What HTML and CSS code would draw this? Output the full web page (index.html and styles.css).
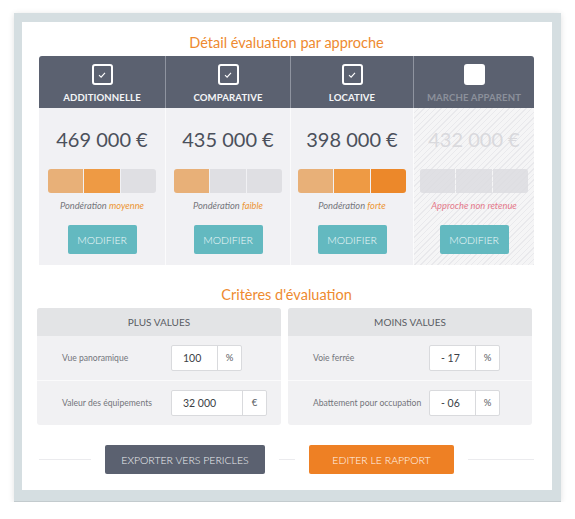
FILE: index.html
```html
<!DOCTYPE html>
<html lang="fr">
<head>
<meta charset="utf-8">
<title>Détail évaluation</title>
<link rel="stylesheet" href="styles.css">
</head>
<body>
<div class="frame">
  <div class="sheet">
    <h2 class="section-title">Détail évaluation par approche</h2>
    <div class="approaches">
      <div class="approach">
        <div class="approach-head">
          <span class="check"><svg viewBox="0 0 10 10" width="10" height="10"><path d="M2 5.2 L4.1 7.2 L8 2.8" fill="none" stroke="#fff" stroke-width="1.1"/></svg></span>
          <span class="approach-name">ADDITIONNELLE</span>
        </div>
        <div class="approach-body">
          <div class="price">469 000 €</div>
          <div class="bar"><span class="seg s1"></span><span class="seg s2"></span><span class="seg"></span></div>
          <div class="weight">Pondération <em>moyenne</em></div>
          <button class="btn-modify">MODIFIER</button>
        </div>
      </div>
      <div class="approach">
        <div class="approach-head">
          <span class="check"><svg viewBox="0 0 10 10" width="10" height="10"><path d="M2 5.2 L4.1 7.2 L8 2.8" fill="none" stroke="#fff" stroke-width="1.1"/></svg></span>
          <span class="approach-name">COMPARATIVE</span>
        </div>
        <div class="approach-body">
          <div class="price">435 000 €</div>
          <div class="bar"><span class="seg s1"></span><span class="seg"></span><span class="seg"></span></div>
          <div class="weight">Pondération <em>faible</em></div>
          <button class="btn-modify">MODIFIER</button>
        </div>
      </div>
      <div class="approach">
        <div class="approach-head">
          <span class="check"><svg viewBox="0 0 10 10" width="10" height="10"><path d="M2 5.2 L4.1 7.2 L8 2.8" fill="none" stroke="#fff" stroke-width="1.1"/></svg></span>
          <span class="approach-name">LOCATIVE</span>
        </div>
        <div class="approach-body">
          <div class="price">398 000 €</div>
          <div class="bar"><span class="seg s1"></span><span class="seg s2"></span><span class="seg s3"></span></div>
          <div class="weight">Pondération <em>forte</em></div>
          <button class="btn-modify">MODIFIER</button>
        </div>
      </div>
      <div class="approach disabled">
        <div class="approach-head">
          <span class="check empty"></span>
          <span class="approach-name">MARCHE APPARENT</span>
        </div>
        <div class="approach-body">
          <div class="price">432 000 €</div>
          <div class="bar"><span class="seg"></span><span class="seg"></span><span class="seg"></span></div>
          <div class="weight rejected">Approche non retenue</div>
          <button class="btn-modify">MODIFIER</button>
        </div>
      </div>
    </div>

    <h2 class="section-title criteria-title">Critères d'évaluation</h2>
    <div class="criteria">
      <div class="panel">
        <div class="panel-head">PLUS VALUES</div>
        <div class="crit-row">
          <span class="crit-label">Vue panoramique</span>
          <span class="field"><span class="field-value">100</span><span class="field-unit">%</span></span>
        </div>
        <div class="crit-row">
          <span class="crit-label">Valeur des équipements</span>
          <span class="field"><span class="field-value wide">32 000</span><span class="field-unit">€</span></span>
        </div>
      </div>
      <div class="panel panel-minus">
        <div class="panel-head">MOINS VALUES</div>
        <div class="crit-row">
          <span class="crit-label">Voie ferrée</span>
          <span class="field"><span class="field-value">- 17</span><span class="field-unit">%</span></span>
        </div>
        <div class="crit-row">
          <span class="crit-label">Abattement pour occupation</span>
          <span class="field"><span class="field-value">- 06</span><span class="field-unit">%</span></span>
        </div>
      </div>
    </div>

    <div class="actions">
      <span class="rule rule-left"></span>
      <button class="btn btn-export">EXPORTER VERS PERICLES</button>
      <span class="rule rule-mid"></span>
      <button class="btn btn-edit">EDITER LE RAPPORT</button>
      <span class="rule rule-right"></span>
    </div>
  </div>
</div>
</body>
</html>
```

FILE: styles.css
```css
* { box-sizing: border-box; }
html, body { margin: 0; padding: 0; background: #fff; }
body {
  font-family: "Lato", "Liberation Sans", Arial, sans-serif;
  color: #4b505b;
  padding: 13px 14px 0 14px;
}
.frame {
  width: 547px;
  height: 489px;
  background: #d5dee1;
  padding: 9px 9px 11px 8px;
  box-shadow: 0 1px 6px rgba(0, 0, 0, 0.12);
  border-bottom: 1px solid #c3cbce;
}
.sheet {
  background: #fff;
  height: 100%;
  padding: 11px 18px 0 17px;
}
.section-title {
  margin: 0;
  font-weight: 400;
  font-size: 14.5px;
  line-height: 20px;
  color: #ee8a2f;
  text-align: center;
}
.approaches {
  margin-top: 3px;
  display: grid;
  grid-template-columns: 126px 125px 123px 121px;
  width: 495px;
}
.approach { display: flex; flex-direction: column; }
.approach + .approach .approach-head { border-left: 1px solid #8f94a0; }
.approach + .approach .approach-body { border-left: 1px solid #fbfbfc; }
.approach-head {
  background: #5b6170;
  height: 52px;
  display: flex;
  flex-direction: column;
  align-items: center;
  padding-top: 8px;
}
.approach:first-child .approach-head { border-top-left-radius: 3px; }
.approach:last-child .approach-head { border-top-right-radius: 3px; }
.check {
  width: 21px;
  height: 21px;
  border: 2px solid #fff;
  border-radius: 3px;
  display: flex;
  align-items: center;
  justify-content: center;
}
.check.empty { background: #fff; }
.approach-name {
  margin-top: 7px;
  font-size: 9.6px;
  font-weight: 700;
  line-height: 12px;
  color: #f4f5f7;
  letter-spacing: 0.1px;
}
.disabled .approach-name { color: #8b909b; }
.approach-body {
  background: #f1f1f4;
  height: 157px;
  display: flex;
  flex-direction: column;
  align-items: center;
  padding-top: 20px;
}
.price {
  font-size: 20px;
  line-height: 22px;
  color: #4b505b;
}
.bar {
  margin-top: 19px;
  width: 108px;
  height: 24px;
  display: flex;
  gap: 1px;
  border-radius: 3px;
  overflow: hidden;
}
.seg { flex: 1; background: #dfdfe3; }
.seg.s1 { background: #e8b078; }
.seg.s2 { background: #ee9a44; }
.seg.s3 { background: #ec882a; }
.weight {
  margin-top: 7px;
  font-size: 9.3px;
  line-height: 12px;
  font-style: italic;
  color: #74757b;
}
.weight em { color: #ec9433; }
.weight.rejected { color: #e4788a; }
.btn-modify {
  margin-top: 13px;
  width: 69px;
  height: 29px;
  border: 0;
  border-radius: 2px;
  background: #63b9c0;
  color: #eef8f9;
  font-family: inherit;
  font-size: 10.5px;
  font-weight: 300;
  padding: 0;
}
.disabled .approach-body {
  background: repeating-linear-gradient(135deg, #f5f5f6 0 3px, #e9e9ec 3px 4px);
}
.disabled .price { color: #d9d9dd; }
.disabled .seg { background: #dcdce0; opacity: 0.85; }

.criteria-title { margin-top: 20px; }
.criteria {
  margin-top: 3px;
  margin-left: -2px;
  width: 495px;
  display: flex;
  gap: 7px;
}
.panel {
  flex: 1;
  background: #f1f1f3;
  border-radius: 3px;
  overflow: hidden;
}
.panel-head {
  background: #e3e4e6;
  height: 28px;
  line-height: 28px;
  text-align: center;
  font-size: 10px;
  color: #5a5d64;
}
.crit-row {
  height: 44px;
  display: flex;
  align-items: center;
  padding-left: 25px;
}
.crit-row + .crit-row { border-top: 1px solid #fafafb; height: 45px; }
.crit-label {
  width: 109px;
  font-size: 8.6px;
  color: #73757b;
}
.panel-minus .crit-label { width: 116px; }
.field {
  display: flex;
  height: 26px;
  background: #fff;
  border: 1px solid #d9dadd;
  border-radius: 2px;
}
.field-value {
  width: 45px;
  padding-left: 11px;
  font-size: 10.5px;
  line-height: 24px;
  color: #3c3f47;
}
.field-value.wide { width: 70px; }
.field-unit {
  width: 24px;
  border-left: 1px solid #d9dadd;
  text-align: center;
  font-size: 9.5px;
  line-height: 24px;
  color: #5a5d64;
}

.actions {
  margin-top: 20px;
  width: 495px;
  display: flex;
  align-items: center;
  gap: 14px;
}
.rule { height: 1px; background: #ebebee; }
.rule-left { width: 52px; }
.rule-mid { width: 16px; }
.rule-right { flex: 1; }
.btn {
  height: 29px;
  border: 0;
  border-radius: 2px;
  font-family: inherit;
  font-size: 10.5px;
  font-weight: 300;
  padding: 0;
}
.btn-export { width: 160px; background: #5b6170; color: #eceef1; }
.btn-edit { width: 145px; background: #ee8024; color: #fff6ee; }
```
